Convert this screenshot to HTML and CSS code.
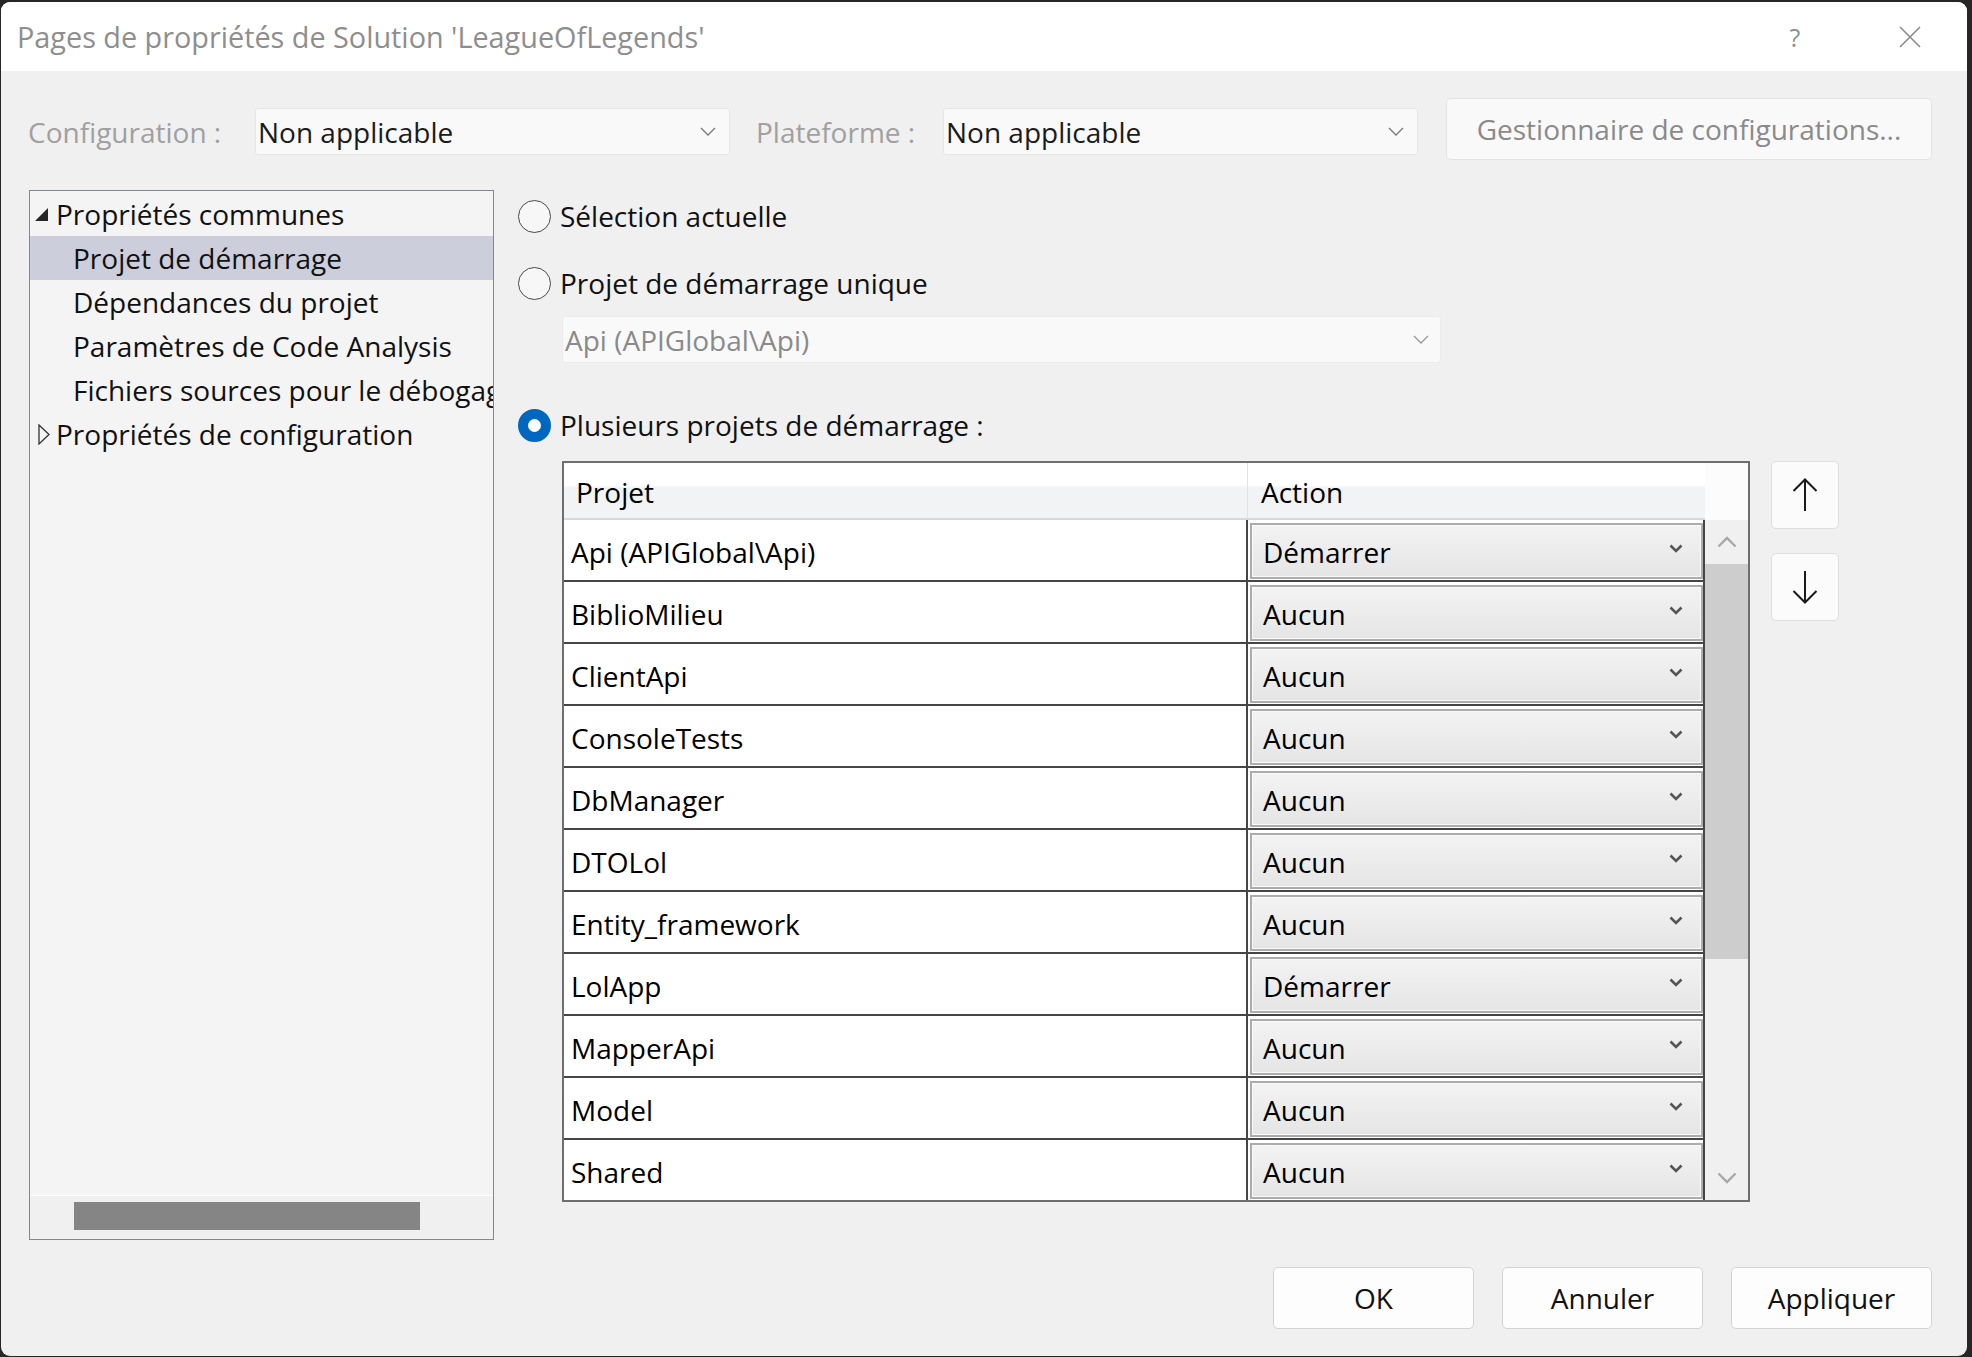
FILE: index.html
```html
<!DOCTYPE html>
<html lang="fr">
<head>
<meta charset="utf-8">
<title>Pages de propriétés</title>
<link rel="stylesheet" href="styles.css">
</head>
<body>
<div class="window">
  <div class="titlebar">
    <span class="title">Pages de propriétés de Solution 'LeagueOfLegends'</span>
    <span class="tb-btn tb-help">?</span>
    <span class="tb-btn tb-close"><svg width="22" height="22" viewBox="0 0 22 22"><path d="M1 1L21 21M21 1L1 21" stroke="#8a8a8a" stroke-width="1.6" fill="none"/></svg></span>
  </div>

  <div class="config-row">
    <span class="cfg-label lbl-conf">Configuration :</span>
    <div class="combo combo-top"><span>Non applicable</span><svg class="chev-thin" width="16" height="9" viewBox="0 0 16 9"><path d="M1 1L8 8L15 1" fill="none" stroke="#7a7a7a" stroke-width="1.4"/></svg></div>
    <span class="cfg-label lbl-plat">Plateforme :</span>
    <div class="combo combo-top"><span>Non applicable</span><svg class="chev-thin" width="16" height="9" viewBox="0 0 16 9"><path d="M1 1L8 8L15 1" fill="none" stroke="#7a7a7a" stroke-width="1.4"/></svg></div>
    <div class="btn-cfgmgr">Gestionnaire de configurations...</div>
  </div>

  <div class="main">
    <div class="tree">
      <div class="tree-items">
        <div class="tree-row lvl0"><svg class="tri" width="14" height="13" viewBox="0 0 14 13"><path d="M13 0V13H0Z" fill="#262626"/></svg><span>Propriétés communes</span></div>
        <div class="tree-row lvl1 selected"><span>Projet de démarrage</span></div>
        <div class="tree-row lvl1"><span>Dépendances du projet</span></div>
        <div class="tree-row lvl1"><span>Paramètres de Code Analysis</span></div>
        <div class="tree-row lvl1"><span>Fichiers sources pour le débogage</span></div>
        <div class="tree-row lvl0"><svg class="tri tri-closed" width="12" height="21" viewBox="0 0 12 21"><path d="M1 1L11 10.5L1 20Z" fill="none" stroke="#333" stroke-width="1.3"/></svg><span>Propriétés de configuration</span></div>
      </div>
      <div class="hscroll"><div class="hthumb"></div></div>
    </div>

    <div class="right">
      <div class="radio-row r1"><span class="radio"></span><span>Sélection actuelle</span></div>
      <div class="radio-row r2"><span class="radio"></span><span>Projet de démarrage unique</span></div>
      <div class="combo combo-disabled"><span>Api (APIGlobal\Api)</span><svg class="chev-thin" width="16" height="9" viewBox="0 0 16 9"><path d="M1 1L8 8L15 1" fill="none" stroke="#9a9a9a" stroke-width="1.4"/></svg></div>
      <div class="radio-row r3"><span class="radio checked"></span><span>Plusieurs projets de démarrage :</span></div>

      <div class="table-area">
        <div class="grid">
          <div class="gcols">
            <div class="ghead">
              <div class="gh-name">Projet</div>
              <div class="gh-action">Action</div>
            </div>
            <div class="gbody">
              <div class="grow"><div class="gname">Api (APIGlobal\Api)</div><div class="gaction"><div class="cell-combo"><span>Démarrer</span><svg width="14" height="9" viewBox="0 0 14 9"><path d="M1.5 1.5L7 7L12.5 1.5" fill="none" stroke="#555" stroke-width="2.6"/></svg></div></div></div>
              <div class="grow"><div class="gname">BiblioMilieu</div><div class="gaction"><div class="cell-combo"><span>Aucun</span><svg width="14" height="9" viewBox="0 0 14 9"><path d="M1.5 1.5L7 7L12.5 1.5" fill="none" stroke="#555" stroke-width="2.6"/></svg></div></div></div>
              <div class="grow"><div class="gname">ClientApi</div><div class="gaction"><div class="cell-combo"><span>Aucun</span><svg width="14" height="9" viewBox="0 0 14 9"><path d="M1.5 1.5L7 7L12.5 1.5" fill="none" stroke="#555" stroke-width="2.6"/></svg></div></div></div>
              <div class="grow"><div class="gname">ConsoleTests</div><div class="gaction"><div class="cell-combo"><span>Aucun</span><svg width="14" height="9" viewBox="0 0 14 9"><path d="M1.5 1.5L7 7L12.5 1.5" fill="none" stroke="#555" stroke-width="2.6"/></svg></div></div></div>
              <div class="grow"><div class="gname">DbManager</div><div class="gaction"><div class="cell-combo"><span>Aucun</span><svg width="14" height="9" viewBox="0 0 14 9"><path d="M1.5 1.5L7 7L12.5 1.5" fill="none" stroke="#555" stroke-width="2.6"/></svg></div></div></div>
              <div class="grow"><div class="gname">DTOLol</div><div class="gaction"><div class="cell-combo"><span>Aucun</span><svg width="14" height="9" viewBox="0 0 14 9"><path d="M1.5 1.5L7 7L12.5 1.5" fill="none" stroke="#555" stroke-width="2.6"/></svg></div></div></div>
              <div class="grow"><div class="gname">Entity_framework</div><div class="gaction"><div class="cell-combo"><span>Aucun</span><svg width="14" height="9" viewBox="0 0 14 9"><path d="M1.5 1.5L7 7L12.5 1.5" fill="none" stroke="#555" stroke-width="2.6"/></svg></div></div></div>
              <div class="grow"><div class="gname">LolApp</div><div class="gaction"><div class="cell-combo"><span>Démarrer</span><svg width="14" height="9" viewBox="0 0 14 9"><path d="M1.5 1.5L7 7L12.5 1.5" fill="none" stroke="#555" stroke-width="2.6"/></svg></div></div></div>
              <div class="grow"><div class="gname">MapperApi</div><div class="gaction"><div class="cell-combo"><span>Aucun</span><svg width="14" height="9" viewBox="0 0 14 9"><path d="M1.5 1.5L7 7L12.5 1.5" fill="none" stroke="#555" stroke-width="2.6"/></svg></div></div></div>
              <div class="grow"><div class="gname">Model</div><div class="gaction"><div class="cell-combo"><span>Aucun</span><svg width="14" height="9" viewBox="0 0 14 9"><path d="M1.5 1.5L7 7L12.5 1.5" fill="none" stroke="#555" stroke-width="2.6"/></svg></div></div></div>
              <div class="grow"><div class="gname">Shared</div><div class="gaction"><div class="cell-combo"><span>Aucun</span><svg width="14" height="9" viewBox="0 0 14 9"><path d="M1.5 1.5L7 7L12.5 1.5" fill="none" stroke="#555" stroke-width="2.6"/></svg></div></div></div>
            </div>
          </div>
          <div class="vscroll">
            <div class="vs-head"></div>
            <div class="vs-arrow"><svg width="20" height="12" viewBox="0 0 20 12"><path d="M1.5 10.5L10 2L18.5 10.5" fill="none" stroke="#a8a8a8" stroke-width="2.4"/></svg></div>
            <div class="vs-thumb"></div>
            <div class="vs-track"></div>
            <div class="vs-arrow"><svg width="20" height="12" viewBox="0 0 20 12"><path d="M1.5 1.5L10 10L18.5 1.5" fill="none" stroke="#a8a8a8" stroke-width="2.4"/></svg></div>
          </div>
        </div>
        <div class="updown">
          <div class="ud-btn"><svg width="26" height="34" viewBox="0 0 26 34"><path d="M13 1.5V33M1.5 13L13 1.5L24.5 13" fill="none" stroke="#1a1a1a" stroke-width="2"/></svg></div>
          <div class="ud-btn"><svg width="26" height="34" viewBox="0 0 26 34"><path d="M13 1V32.5M1.5 21L13 32.5L24.5 21" fill="none" stroke="#1a1a1a" stroke-width="2"/></svg></div>
        </div>
      </div>
    </div>
  </div>

  <div class="footer">
    <div class="btn">OK</div>
    <div class="btn">Annuler</div>
    <div class="btn">Appliquer</div>
  </div>
</div>
</body>
</html>
```

FILE: styles.css
```css
* { box-sizing: border-box; }
html, body { margin: 0; padding: 0; }
body {
  width: 1972px;
  height: 1357px;
  overflow: hidden;
  background: #262626;
  font-family: "Open Sans", "Noto Sans", "DejaVu Sans", sans-serif;
  color: #000;
}

.window {
  margin: 2px 0 0 1px;
  width: 1966px;
  height: 1354px;
  background: #f0f0f0;
  border-radius: 9px;
  overflow: hidden;
  display: flex;
  flex-direction: column;
}

/* title bar */
.titlebar {
  height: 69px;
  flex: none;
  background: #fff;
  display: flex;
  align-items: center;
  padding-left: 16px;
  padding-right: 27px;
}
.title {
  flex: 1;
  font-size: 28.8px;
  color: #8e8e8e;
  white-space: nowrap;
}
.tb-btn {
  width: 60px;
  height: 40px;
  display: flex;
  align-items: center;
  justify-content: center;
  color: #8e8e8e;
}
.tb-help { font-size: 25px; }
.tb-close { margin-left: 55px; }

/* config row */
.config-row {
  margin-top: 27px;
  height: 62px;
  flex: none;
  display: flex;
  align-items: center;
  padding-left: 27px;
  padding-right: 35px;
  font-size: 28px;
}
.cfg-label {
  color: #a0a0a0;
  white-space: nowrap;
  margin-top: 5px;
}
.lbl-conf { width: 227px; }
.lbl-plat { width: 187px; margin-left: 26px; }

.combo {
  display: flex;
  align-items: center;
  justify-content: space-between;
  height: 47px;
  background: #f9f9f9;
  border: 1px solid #e6e6e6;
  border-radius: 3px;
  padding-left: 2px;
  padding-right: 13px;
  white-space: nowrap;
}
.combo-top {
  width: 475px;
  color: #1b1b1b;
  margin-top: 5px;
}
.btn-cfgmgr {
  margin-left: auto;
  width: 486px;
  height: 62px;
  background: #f9f9f9;
  border: 1px solid #e3e3e3;
  border-radius: 5px;
  display: flex;
  align-items: center;
  justify-content: center;
  color: #8a8a8a;
  white-space: nowrap;
}

/* main */
.main {
  margin-top: 30px;
  flex: none;
  display: flex;
  padding-left: 28px;
}

.tree {
  width: 465px;
  height: 1050px;
  border: 1px solid #828790;
  background: #f4f4f4;
  display: flex;
  flex-direction: column;
  overflow: hidden;
}
.tree-items {
  flex: 1;
  padding-top: 1px;
  overflow: hidden;
}
.tree-row {
  height: 44px;
  display: flex;
  align-items: center;
  font-size: 28px;
  white-space: nowrap;
  color: #111;
}
.tree-row.lvl0 { padding-left: 5px; }
.tree-row.lvl0 .tri { margin-right: 7px; flex: none; }
.tree-row.lvl0 .tri-closed { margin-left: 3px; margin-right: 6px; }
.tree-row.lvl1 { padding-left: 43px; }
.tree-row.selected { background: #cccedb; }

.hscroll {
  height: 44px;
  flex: none;
  border-top: 1px solid #ffffff;
  background: #f0f0f0;
  padding-top: 6px;
  padding-left: 44px;
}
.hthumb {
  width: 346px;
  height: 28px;
  background: #858585;
}

/* right column */
.right {
  margin-left: 24px;
  display: flex;
  flex-direction: column;
  font-size: 28px;
}
.radio-row {
  height: 52px;
  display: flex;
  align-items: center;
  white-space: nowrap;
  color: #111;
}
.r2 { margin-top: 15px; }
.r3 { margin-top: 36px; }
.radio {
  width: 33px;
  height: 33px;
  border-radius: 50%;
  border: 1.5px solid #4a4a4a;
  background: #f7f7f7;
  margin-right: 9px;
  flex: none;
}
.radio.checked {
  border: 10.5px solid #0067c0;
  background: #fff;
}
.combo-disabled {
  margin-top: 7px;
  margin-left: 44px;
  width: 879px;
  color: #8a8a8a;
  border-color: #ebebeb;
  padding-right: 11px;
}

.table-area {
  margin-top: 10px;
  margin-left: 44px;
  display: flex;
  align-items: flex-start;
}
.grid {
  width: 1188px;
  height: 741px;
  border: 2px solid #6e6e6e;
  display: flex;
  background: #fff;
}
.gcols {
  width: 1141px;
  display: flex;
  flex-direction: column;
  overflow: hidden;
}
.ghead {
  height: 57px;
  flex: none;
  display: flex;
  background: linear-gradient(#ffffff 0%, #ffffff 40%, #f2f3f5 45%, #f2f3f5 100%);
  border-bottom: 2px solid #d8d8d8;
}
.gh-name {
  width: 684px;
  border-right: 1px solid #e2e2e2;
  display: flex;
  align-items: center;
  padding-left: 12px;
  padding-top: 3px;
}
.gh-action {
  flex: 1;
  display: flex;
  align-items: center;
  padding-left: 13px;
  padding-top: 3px;
}
.gbody {
  flex: 1;
  overflow: hidden;
}
.grow {
  height: 62px;
  display: flex;
  border-bottom: 2px solid #454545;
}
.gname {
  width: 684px;
  border-right: 2px solid #454545;
  display: flex;
  align-items: center;
  padding-left: 7px;
  padding-top: 4px;
  white-space: nowrap;
}
.gaction {
  width: 457px;
  border-right: 2px solid #454545;
  padding: 3px 0 1px 2px;
}
.cell-combo {
  height: 56px;
  border: 2px solid #acacac;
  box-shadow: inset 0 0 0 1px #f9f9f9;
  background: linear-gradient(#f3f3f3, #e5e5e5);
  display: flex;
  align-items: center;
  justify-content: space-between;
  padding-left: 11px;
  padding-right: 18px;
  padding-top: 2px;
}
.cell-combo svg { margin-top: -8px; }

.vscroll {
  flex: 1;
  display: flex;
  flex-direction: column;
  background: #f0f0f0;
}
.vs-head {
  height: 57px;
  background: #fcfcfc;
}
.vs-arrow {
  height: 44px;
  display: flex;
  align-items: center;
  justify-content: center;
}
.vs-thumb {
  height: 395px;
  background: #cdcdcd;
}
.vs-track { flex: 1; }

.updown {
  margin-left: 21px;
  display: flex;
  flex-direction: column;
  gap: 24px;
}
.ud-btn {
  width: 68px;
  height: 68px;
  background: #fbfbfb;
  border: 1px solid #dedede;
  border-radius: 5px;
  display: flex;
  align-items: center;
  justify-content: center;
}

/* footer */
.footer {
  margin-top: 27px;
  display: flex;
  justify-content: flex-end;
  gap: 28px;
  padding-right: 35px;
}
.btn {
  width: 201px;
  height: 62px;
  background: #fdfdfd;
  border: 1px solid #d3d3d3;
  border-radius: 5px;
  display: flex;
  align-items: center;
  justify-content: center;
  font-size: 28px;
  color: #111;
}
```
